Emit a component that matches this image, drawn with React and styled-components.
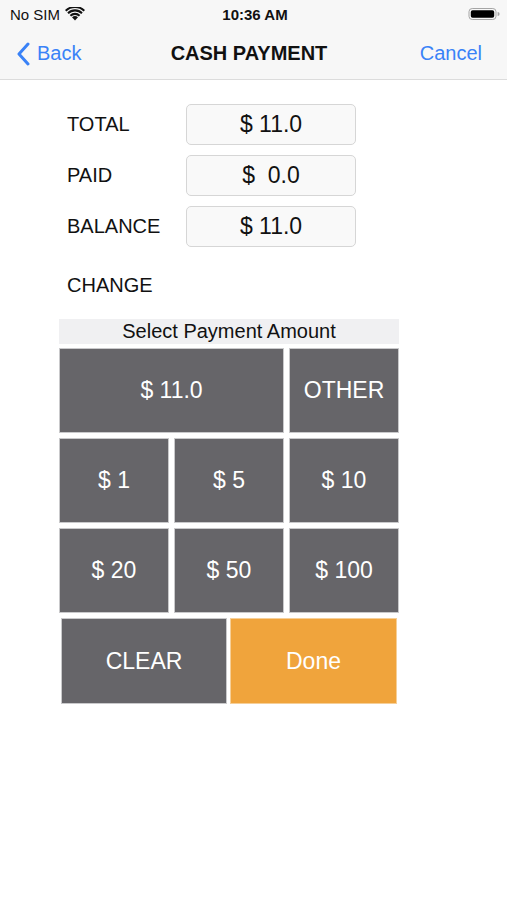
import React from "react";
import styled, { createGlobalStyle } from "styled-components";

const GlobalStyle = createGlobalStyle`
  body {
    margin: 0;
    background: #ffffff;
    font-family: "Liberation Sans", Arial, sans-serif;
  }
`;

const Screen = styled.div`
  width: 507px;
  height: 900px;
  background: #ffffff;
  overflow: hidden;
`;

const Top = styled.div`
  background: #f7f7f7;
  border-bottom: 1px solid #dcdcdc;
`;

const StatusBar = styled.div`
  height: 28px;
  display: grid;
  grid-template-columns: 1fr auto 1fr;
  align-items: center;
  padding: 0 7px 0 10px;
  font-size: 15px;
  color: #111;
`;

const Carrier = styled.div`
  display: flex;
  align-items: center;
  gap: 5px;
`;

const Clock = styled.div`
  font-weight: bold;
`;

const Battery = styled.div`
  justify-self: end;
  display: flex;
  align-items: center;
`;

const NavBar = styled.div`
  height: 51px;
  display: grid;
  grid-template-columns: 1fr auto 1fr;
  align-items: center;
  padding: 0 25px 0 16px;
`;

const NavButton = styled.div`
  display: flex;
  align-items: center;
  gap: 7px;
  color: #3a82f7;
  font-size: 20px;
  justify-self: ${(p) => (p.$end ? "end" : "start")};
`;

const Title = styled.div`
  font-size: 20px;
  font-weight: bold;
  color: #111;
`;

const Form = styled.div`
  display: flex;
  flex-direction: column;
  gap: 10px;
  padding: 24px 0 0 67px;
`;

const Row = styled.div`
  display: flex;
  align-items: center;
  height: 41px;
  margin-top: ${(p) => p.$offset || 0}px;
`;

const Label = styled.div`
  width: 119px;
  font-size: 20px;
  color: #111;
`;

const ValueBox = styled.div`
  width: 168px;
  height: 39px;
  border: 1px solid #d6d6d6;
  border-radius: 5px;
  background: #f9f9f9;
  display: flex;
  align-items: center;
  justify-content: center;
  font-size: 23px;
  color: #111;
  white-space: pre;
`;

const Pad = styled.div`
  width: 340px;
  margin: 13px 0 0 59px;
  display: flex;
  flex-direction: column;
  gap: 4px;
`;

const PadHeader = styled.div`
  height: 25px;
  background: #f0f0f2;
  display: flex;
  align-items: center;
  justify-content: center;
  font-size: 20px;
  color: #111;
`;

const Keys = styled.div`
  display: grid;
  grid-template-columns: repeat(3, 110px);
  grid-auto-rows: 85px;
  gap: 5px;
`;

const Key = styled.div`
  grid-column: span ${(p) => p.$span || 1};
  box-sizing: border-box;
  background: ${(p) => (p.$accent ? "#f0a43c" : "#666569")};
  border: 1px solid ${(p) => (p.$accent ? "#f6cf98" : "#c9c9cb")};
  color: #ffffff;
  font-size: 23px;
  display: flex;
  align-items: center;
  justify-content: center;
`;

const Actions = styled.div`
  display: grid;
  grid-template-columns: 166px 167px;
  grid-auto-rows: 86px;
  gap: 3px;
  padding: 0 2px;
  margin-top: 1px;
`;

const Wifi = () => (
  <svg width="20" height="14" viewBox="0 0 20 14">
    <path d="M10 13.5 L7 10.3 A4.4 4.4 0 0 1 13 10.3 Z" fill="#111" />
    <path d="M4.7 8 A7.6 7.6 0 0 1 15.3 8 L13.9 9.5 A5.6 5.6 0 0 0 6.1 9.5 Z" fill="#111" />
    <path d="M2.3 5.5 A11 11 0 0 1 17.7 5.5 L16.3 7 A9 9 0 0 0 3.7 7 Z" fill="#111" />
    <path d="M0 3 A14.4 14.4 0 0 1 20 3 L18.6 4.5 A12.4 12.4 0 0 0 1.4 4.5 Z" fill="#111" />
  </svg>
);

const BatteryIcon = () => (
  <svg width="32" height="14" viewBox="0 0 32 14">
    <rect x="1" y="1.5" width="27" height="11" rx="3.2" fill="none" stroke="#a5a5a5" strokeWidth="1" />
    <rect x="2.8" y="3.3" width="23.4" height="7.4" rx="1.8" fill="#000" />
    <path d="M29.6 5 a2 2 0 0 1 0 4 Z" fill="#a5a5a5" />
  </svg>
);

const Chevron = () => (
  <svg width="14" height="24" viewBox="0 0 14 24">
    <path d="M12 2 L3 12 L12 22" fill="none" stroke="#3a82f7" strokeWidth="3" strokeLinecap="round" strokeLinejoin="round" />
  </svg>
);

const summary = [
  { label: "TOTAL", value: "$ 11.0" },
  { label: "PAID", value: "$  0.0" },
  { label: "BALANCE", value: "$ 11.0" },
];

const keys = [
  { text: "$ 11.0", span: 2 },
  { text: "OTHER" },
  { text: "$ 1" },
  { text: "$ 5" },
  { text: "$ 10" },
  { text: "$ 20" },
  { text: "$ 50" },
  { text: "$ 100" },
];

const App = () => {
  return (
    <Screen>
      <GlobalStyle />
      <Top>
        <StatusBar>
          <Carrier>
            No SIM <Wifi />
          </Carrier>
          <Clock>10:36 AM</Clock>
          <Battery>
            <BatteryIcon />
          </Battery>
        </StatusBar>
        <NavBar>
          <NavButton>
            <Chevron />
            Back
          </NavButton>
          <Title>CASH PAYMENT</Title>
          <NavButton $end>Cancel</NavButton>
        </NavBar>
      </Top>

      <Form>
        {summary.map((s) => (
          <Row key={s.label}>
            <Label>{s.label}</Label>
            <ValueBox>{s.value}</ValueBox>
          </Row>
        ))}
        <Row $offset={8}>
          <Label>CHANGE</Label>
        </Row>
      </Form>

      <Pad>
        <PadHeader>Select Payment Amount</PadHeader>
        <Keys>
          {keys.map((k) => (
            <Key key={k.text} $span={k.span}>
              {k.text}
            </Key>
          ))}
        </Keys>
        <Actions>
          <Key>CLEAR</Key>
          <Key $accent>Done</Key>
        </Actions>
      </Pad>
    </Screen>
  );
};

export default App;
